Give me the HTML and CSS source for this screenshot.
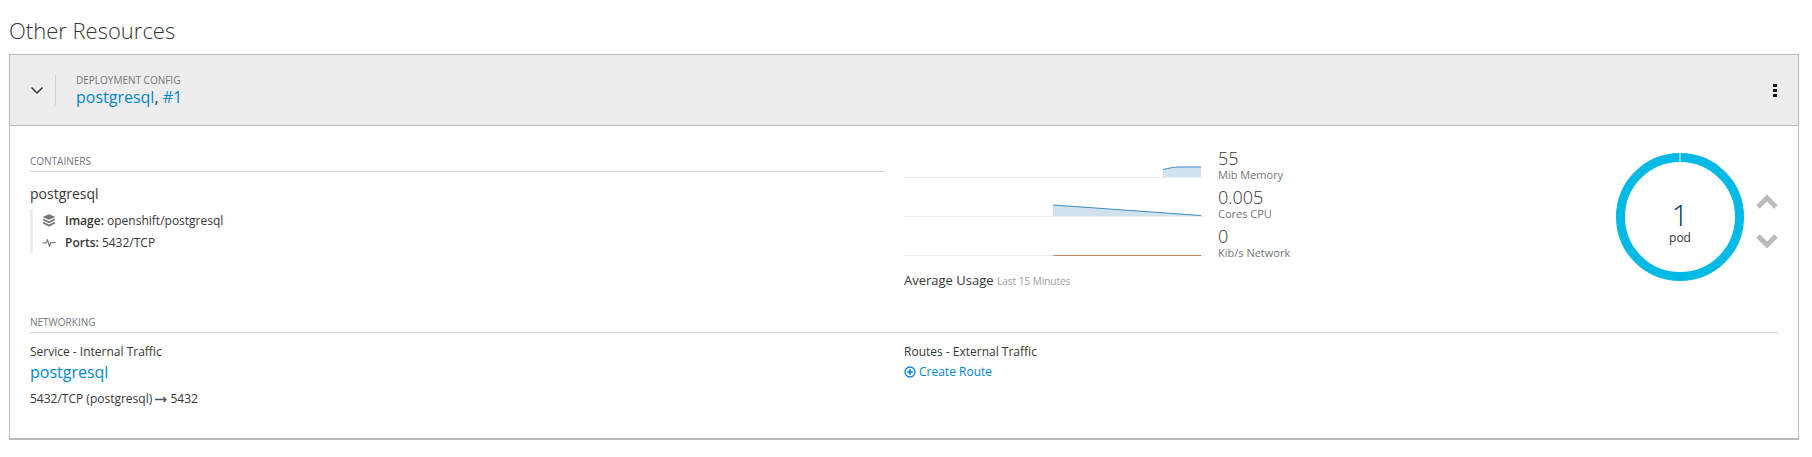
FILE: index.html
```html
<!DOCTYPE html>
<html lang="en">
<head>
  <meta charset="UTF-8" />
  <title>Other Resources</title>
  <link rel="stylesheet" href="styles.css">
</head>
<body>
  <h1 class="page-title">Other Resources</h1>

  <div class="card">
    <div class="card-header">
      <div class="toggle">
        <svg width="14" height="9" viewBox="0 0 14 9"><path d="M1.5 1.5 7 7l5.500-5.500" fill="none" stroke="#363636" stroke-width="1.500"/></svg>
      </div>
      <div class="header-text">
        <div class="kind">DEPLOYMENT CONFIG</div>
        <div class="header-name"><a href="#">postgresql</a>, <a href="#">#1</a></div>
      </div>
      <div class="kebab"><span></span><span></span><span></span></div>
    </div>

    <div class="card-body">
      <div class="top-row">
        <div class="containers">
          <div class="section-title">CONTAINERS</div>
          <div class="container-name">postgresql</div>
          <div class="container-info">
            <div class="info-line">
              <svg class="info-icon" width="14" height="13" viewBox="0 0 14 13">
                <path d="M7 .2 13.500 3 7 5.800 .5 3z" fill="#72767b"/>
                <path d="M1.800 4.800 .5 6 7 9.300 13.500 6 12.200 4.800 7 7.200z" fill="#72767b"/>
                <path d="M1.800 8 .5 9.200 7 12.800 13.500 9.200 12.200 8 7 10.500z" fill="#72767b"/>
              </svg>
              <span><b>Image:</b> openshift/postgresql</span>
            </div>
            <div class="info-line">
              <svg class="info-icon" width="14" height="13" viewBox="0 0 14 13">
                <path d="M.5 7H4L5.500 4 7.500 10 9 6.500h4.500" fill="none" stroke="#72767b" stroke-width="1.200"/>
              </svg>
              <span><b>Ports:</b> 5432/TCP</span>
            </div>
          </div>
        </div>

        <div class="metrics">
          <div class="metric">
            <svg class="spark" width="300" height="39" viewBox="0 0 300 39">
              <path d="M259 30.500C266 29 270 28 275 28H297V38H259z" fill="#d1e2ef"/>
              <path d="M259 30.500C266 29 270 28 275 28H297" fill="none" stroke="#3f8bc0"/>
              <path d="M0 38.500H300" stroke="#ececec"/>
            </svg>
            <div class="metric-text">
              <div class="metric-value">55</div>
              <div class="metric-label">Mib Memory</div>
            </div>
          </div>
          <div class="metric">
            <svg class="spark" width="300" height="39" viewBox="0 0 300 39">
              <path d="M149 27 297 37.500V38H149z" fill="#d1e2ef"/>
              <path d="M149 27 297 37.500" fill="none" stroke="#3f8bc0"/>
              <path d="M0 38.500H300" stroke="#ececec"/>
            </svg>
            <div class="metric-text">
              <div class="metric-value">0.005</div>
              <div class="metric-label">Cores CPU</div>
            </div>
          </div>
          <div class="metric">
            <svg class="spark" width="300" height="39" viewBox="0 0 300 39">
              <path d="M0 38.500H300" stroke="#ececec"/>
              <path d="M149 38.500H297" stroke="#c58a5c"/>
            </svg>
            <div class="metric-text">
              <div class="metric-value">0</div>
              <div class="metric-label">Kib/s Network</div>
            </div>
          </div>
          <div class="usage">Average Usage <small>Last 15 Minutes</small></div>
        </div>

        <div class="pods">
          <div class="donut">
            <svg width="130" height="130" viewBox="0 0 130 130">
              <circle cx="65" cy="65" r="59.500" fill="none" stroke="#00b9e4" stroke-width="9"/>
              <path d="M65 0V10" stroke="#fff"/>
            </svg>
            <div class="donut-text">
              <div class="donut-count">1</div>
              <div class="donut-unit">pod</div>
            </div>
          </div>
          <div class="scale">
            <svg width="22" height="15" viewBox="0 0 22 15"><path d="M2 13 11 4l9 9" fill="none" stroke="#bbb" stroke-width="5"/></svg>
            <svg width="22" height="15" viewBox="0 0 22 15"><path d="M2 2l9 9 9-9" fill="none" stroke="#bbb" stroke-width="5"/></svg>
          </div>
        </div>
      </div>

      <div class="section-title">NETWORKING</div>
      <div class="net-row">
        <div>
          <div class="net-title">Service - Internal Traffic</div>
          <a class="service-link" href="#">postgresql</a>
          <div class="port-map">5432/TCP (postgresql)
            <svg width="12" height="7" viewBox="0 0 12 7"><path d="M0 3.500H10M8.500 1 11 3.500 8.500 6" fill="none" stroke="#4d5258" stroke-width="1.300"/></svg>
            5432</div>
        </div>
        <div>
          <div class="net-title">Routes - External Traffic</div>
          <a class="route-link" href="#">
            <svg width="12" height="12" viewBox="0 0 12 12">
              <circle cx="6" cy="6" r="5" fill="none" stroke="#0088ce" stroke-width="1.300"/>
              <path d="M3 6H9M6 3V9" stroke="#0088ce" stroke-width="1.500"/>
            </svg>
            Create Route
          </a>
        </div>
      </div>
    </div>
  </div>
</body>
</html>
```

FILE: styles.css
```css
body {
  font-family: "Open Sans", sans-serif;
  font-size: 12px;
  color: #363636;
  margin: 0;
  padding: 0 13px 0 9px;
  background-color: #fff;
}

a {
  color: #0088ce;
  text-decoration: none;
}

b {
  font-weight: 600;
}

.page-title {
  font-size: 22px;
  font-weight: 300;
  line-height: 30px;
  margin: 0;
  padding: 15px 0 9px;
}

.card {
  border: 1px solid #bbb;
  border-bottom-width: 2px;
}

.card-header {
  display: flex;
  align-items: center;
  height: 70px;
  background-color: #ededed;
  border-bottom: 1px solid #bbb;
}

.toggle {
  display: flex;
  align-items: center;
  height: 30px;
  padding: 0 11px 0 20px;
  border-right: 1px solid #d1d1d1;
}

.header-text {
  flex: 1;
  padding-left: 20px;
  padding-top: 2px;
}

.kind {
  font-size: 10px;
  line-height: 13px;
  color: #72767b;
}

.header-name {
  font-size: 16px;
  line-height: 21px;
}

.kebab {
  display: flex;
  flex-direction: column;
  gap: 2px;
  margin-right: 21px;
}

.kebab span {
  width: 4px;
  height: 3px;
  background-color: #151515;
}

.card-body {
  padding: 28px 20px 0 20px;
}

.top-row {
  display: flex;
  height: 161px;
}

.containers {
  width: 854px;
  margin-right: 20px;
}

.section-title {
  font-size: 10px;
  line-height: 14px;
  color: #72767b;
  padding-bottom: 3px;
  border-bottom: 1px solid #d1d1d1;
}

.container-name {
  font-size: 14px;
  line-height: 20px;
  margin-top: 12px;
}

.container-info {
  margin-top: 5px;
  padding-left: 9px;
  border-left: 3px solid #ededed;
}

.info-line {
  display: flex;
  align-items: center;
  height: 22px;
}

.info-icon {
  margin-right: 9px;
}

.metrics {
  width: 560px;
  margin-top: -15px;
}

.metric {
  display: flex;
  align-items: flex-end;
  height: 39px;
}

.spark {
  display: block;
  flex: none;
}

.metric-text {
  margin-left: 14px;
  margin-bottom: -3px;
}

.metric-value {
  font-size: 18px;
  font-weight: 300;
  line-height: 20px;
}

.metric-label {
  font-size: 11px;
  line-height: 13px;
  color: #72767b;
}

.usage {
  font-size: 13px;
  margin-top: 15px;
}

.usage small {
  font-size: 10px;
  color: #9c9c9c;
}

.pods {
  display: flex;
  align-items: center;
  height: 130px;
  margin-left: 151px;
  margin-top: -2px;
}

.donut {
  position: relative;
  width: 130px;
  height: 130px;
}

.donut svg {
  display: block;
}

.donut-text {
  position: absolute;
  top: 48px;
  left: 0;
  right: 0;
  text-align: center;
}

.donut-count {
  font-size: 30px;
  font-weight: 300;
  line-height: 30px;
  color: #00366d;
}

.donut-unit {
  font-size: 12px;
  line-height: 14px;
  padding-top: 1px;
}

.scale {
  display: flex;
  flex-direction: column;
  gap: 25px;
  margin-left: 11px;
  margin-top: 9px;
}

.scale svg {
  display: block;
}

.net-row {
  display: grid;
  grid-template-columns: 874px 874px;
  padding: 10px 0 31px;
}

.net-title {
  line-height: 17px;
}

.service-link {
  display: block;
  font-size: 16px;
  line-height: 24px;
}

.port-map {
  line-height: 17px;
  margin-top: 6px;
}

.route-link {
  display: flex;
  align-items: center;
  gap: 3px;
  line-height: 17px;
  margin-top: 3px;
}
```
